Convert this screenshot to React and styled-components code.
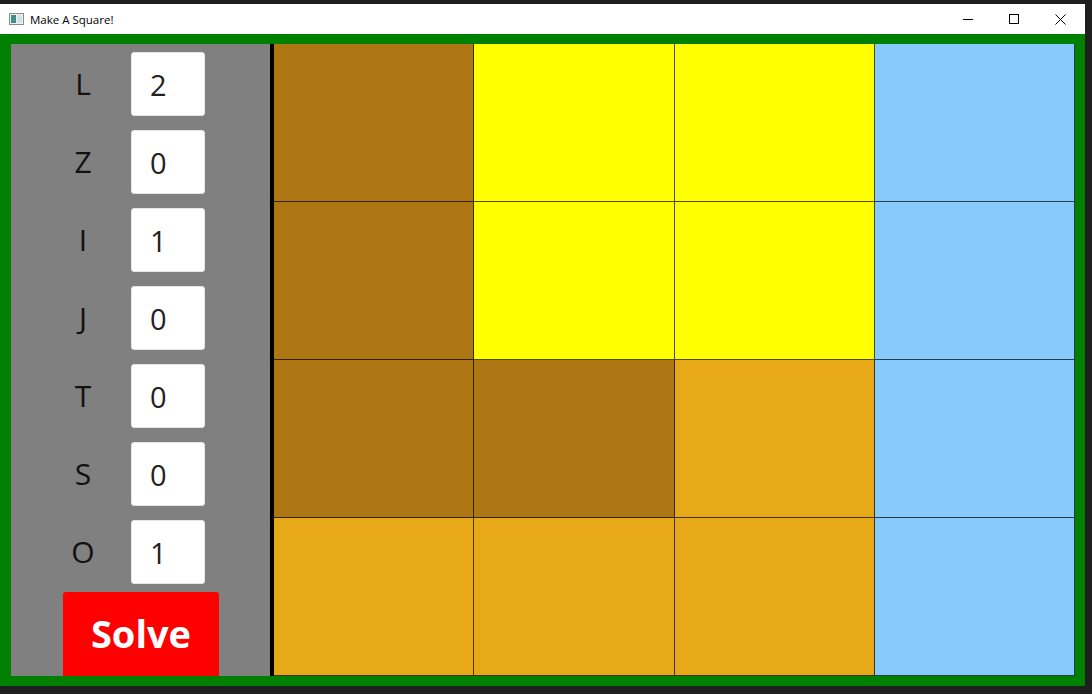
import React from "react";
import styled, { createGlobalStyle } from "styled-components";

const GlobalStyle = createGlobalStyle`
  html, body {
    margin: 0;
    padding: 0;
    background: #1f1f1f;
    overflow: hidden;
  }
  body {
    font-family: "Open Sans", "Noto Sans", sans-serif;
  }
`;

const Window = styled.div`
  margin-top: 4px;
  width: 1085px;
  height: 682px;
  display: flex;
  flex-direction: column;
  background: #ffffff;
`;

const TitleBar = styled.div`
  height: 30px;
  display: flex;
  align-items: center;
  background: #ffffff;
  padding-left: 9px;
  font-size: 11.5px;
  color: #000;
`;

const TitleText = styled.span`
  margin-left: 6px;
  flex: 1;
`;

const WinButton = styled.div`
  width: 46px;
  height: 30px;
  display: flex;
  align-items: center;
  justify-content: center;
`;

const Body = styled.div`
  flex: 1;
  display: flex;
  background: #008000;
  padding: 10px 10px 10px 11px;
`;

const Panel = styled.div`
  width: 259px;
  background: #808080;
  display: flex;
  flex-direction: column;
  align-items: flex-start;
  padding-top: 8px;
  box-sizing: border-box;
`;

const Row = styled.div`
  display: grid;
  grid-template-columns: 96px 74px;
  padding-left: 24px;
  height: 64px;
  margin-bottom: 14px;
  align-items: center;
`;

const Label = styled.div`
  text-align: center;
  font-size: 30px;
  color: #111;
  line-height: 1;
`;

const Count = styled.div`
  height: 64px;
  background: #ffffff;
  border-radius: 3px;
  box-sizing: border-box;
  border: 1px solid #e6e6e6;
  display: flex;
  align-items: center;
  padding-left: 18px;
  font-size: 29px;
  color: #222;
`;

const SolveButton = styled.button`
  margin: -6px 0 0 52px;
  width: 156px;
  height: 84px;
  border: none;
  border-radius: 3px 3px 0 0;
  background: #ff0000;
  color: #ffffff;
  font-family: "Open Sans", "Noto Sans", sans-serif;
  font-weight: 700;
  font-size: 38px;
  padding: 0 0 3px 0;
`;

const Divider = styled.div`
  width: 4px;
  background: #000000;
`;

const Board = styled.div`
  flex: 1;
  display: grid;
  grid-template-columns: repeat(4, 1fr);
  grid-template-rows: repeat(4, 1fr);
`;

const Cell = styled.div`
  background: ${(p) => p.$color};
  border-right: 1px solid rgba(0, 0, 0, 0.7);
  border-bottom: 1px solid rgba(0, 0, 0, 0.7);
`;

const COLORS = {
  b: "#af7614",
  y: "#ffff00",
  o: "#e8a918",
  s: "#87cafc",
};

const layout = ["byys", "byys", "bbos", "ooos"];

const pieces = [
  ["L", 2],
  ["Z", 0],
  ["I", 1],
  ["J", 0],
  ["T", 0],
  ["S", 0],
  ["O", 1],
];

function AppIcon() {
  return (
    <svg width="15" height="12" viewBox="0 0 15 12">
      <rect x="0.5" y="0.5" width="14" height="11" fill="#f2f2f2" stroke="#8a8a8a" />
      <rect x="2" y="2" width="5" height="8" fill="#3f8f86" />
      <rect x="8" y="2" width="5" height="8" fill="#cfe6e3" />
    </svg>
  );
}

export default function App() {
  return (
    <>
      <GlobalStyle />
      <Window>
        <TitleBar>
          <AppIcon />
          <TitleText>Make A Square!</TitleText>
          <WinButton>
            <svg width="10" height="10" viewBox="0 0 10 10">
              <line x1="0" y1="5.5" x2="10" y2="5.5" stroke="#000" strokeWidth="1" />
            </svg>
          </WinButton>
          <WinButton>
            <svg width="10" height="10" viewBox="0 0 10 10">
              <rect x="0.5" y="0.5" width="9" height="9" fill="none" stroke="#000" strokeWidth="1" />
            </svg>
          </WinButton>
          <WinButton style={{ marginRight: 2 }}>
            <svg width="11" height="11" viewBox="0 0 11 11">
              <path d="M0.5 0.5 L10.5 10.5 M10.5 0.5 L0.5 10.5" stroke="#000" strokeWidth="1" />
            </svg>
          </WinButton>
        </TitleBar>
        <Body>
          <Panel>
            {pieces.map(([name, n]) => (
              <Row key={name}>
                <Label>{name}</Label>
                <Count>{n}</Count>
              </Row>
            ))}
            <SolveButton>Solve</SolveButton>
          </Panel>
          <Divider />
          <Board>
            {layout.map((row, r) =>
              row.split("").map((c, i) => <Cell key={r + "-" + i} $color={COLORS[c]} />)
            )}
          </Board>
        </Body>
      </Window>
    </>
  );
}
